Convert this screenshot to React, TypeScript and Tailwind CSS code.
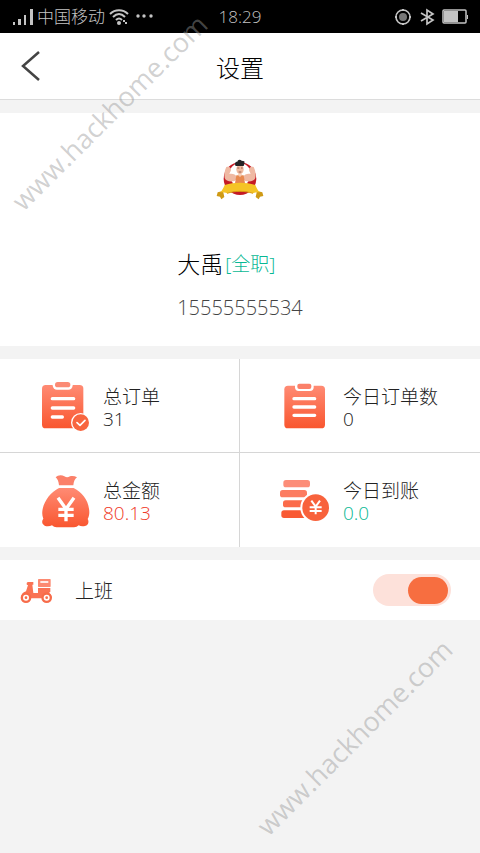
import { useState } from "react";
import type { ReactNode } from "react";

function OrangeFill({ id }: { id: string }) {
  return (
    <defs>
      <linearGradient id={id} x1="0" y1="0" x2="0" y2="1">
        <stop offset="0" stopColor="#ff8b74" />
        <stop offset="1" stopColor="#f9562f" />
      </linearGradient>
    </defs>
  );
}

function TotalOrdersIcon() {
  return (
    <svg width="50" height="52" viewBox="0 0 150 156" aria-hidden="true">
      <OrangeFill id="total-orders" />
      <rect x="6" y="15" width="124" height="130" rx="11" fill="url(#total-orders)" />
      <rect x="38" y="-4" width="60" height="33" rx="13" fill="#fff" />
      <rect x="45" y="6" width="46" height="16" rx="8" fill="#fb8a74" />
      <path d="M37 56h64M37 84h64M37 111h30" stroke="#fff" strokeWidth="10" strokeLinecap="round" />
      <circle cx="122" cy="128" r="29" fill="#fff" />
      <circle cx="122" cy="128" r="25" fill="#f8653f" />
      <path d="M111 128l9 8 15-15" fill="none" stroke="#fff" strokeWidth="5" strokeLinecap="round" strokeLinejoin="round" />
    </svg>
  );
}

function TodayOrdersIcon() {
  return (
    <svg width="50" height="52" viewBox="0 0 150 156" aria-hidden="true">
      <OrangeFill id="today-orders" />
      <rect x="13" y="17" width="122" height="128" rx="11" fill="url(#today-orders)" />
      <rect x="45" y="0" width="56" height="33" rx="11" fill="#fff" />
      <rect x="52" y="11" width="42" height="16" rx="6" fill="#fb8069" />
      <path d="M42 56h62M42 81h62M42 106h62" stroke="#fff" strokeWidth="10" strokeLinecap="round" />
    </svg>
  );
}

function MoneyBagIcon() {
  return (
    <svg width="50" height="56" viewBox="0 0 150 168" aria-hidden="true">
      <OrangeFill id="money-bag" />
      <path d="M47 16c6-7 18-8 26-3 7 4 11 3 17 0 7-2 14-1 21 3-7 6-10 13-11 24H57c-1-11-4-18-10-24z" fill="#fb8069" />
      <path
        d="M57 48h44c25 13 42 34 46 62 2 11 1 22-4 31 5 8 2 18-8 21-7 2-14 1-19-2-4 4-8 6-14 6H50c-6 0-10-2-14-6-6 3-15 4-22 1-8-4-10-13-4-21-4-9-4-19-2-29 6-28 25-50 49-63z"
        fill="url(#money-bag)"
      />
      <path d="M54 77l24 34 24-34M78 108v40M55 112h46M55 130h46" fill="none" stroke="#fff" strokeWidth="10" />
    </svg>
  );
}

function CoinsIcon() {
  return (
    <svg width="50" height="48" viewBox="0 0 150 144" aria-hidden="true">
      <rect x="10" y="12" width="80" height="22" rx="8" fill="#fc8d78" />
      <rect x="0" y="42" width="81" height="22" rx="8" fill="#fc7c61" />
      <rect x="9" y="73" width="80" height="21" rx="8" fill="#fb6b4a" />
      <rect x="4" y="103" width="84" height="23" rx="8" fill="#f95a34" />
      <circle cx="107" cy="95" r="46" fill="#fff" />
      <circle cx="107" cy="95" r="40" fill="#f8623c" />
      <path d="M94 74l13 18 13-18M107 91v24M89 94h36M89 105h36" fill="none" stroke="#fff" strokeWidth="6" />
    </svg>
  );
}

function ScooterIcon() {
  return (
    <svg width="33" height="27" viewBox="0 0 99 81" aria-hidden="true">
      <path d="M20 20c0-4 3-5 7-5h13v8h-3l3 25h14V33h37v11l-4 4c6 3 8 8 8 16H3c0-11 5-18 15-21l6-19c-3 0-4-1-4-4z" fill="#fa7354" />
      <rect x="54" y="6" width="38" height="24" rx="2" fill="#fc8a72" />
      <path d="M61 15h24" stroke="#fff" strokeWidth="5" />
      <circle cx="18" cy="62" r="16" fill="#f76c4a" />
      <circle cx="18" cy="62" r="9" fill="#fff" />
      <circle cx="18" cy="62" r="4" fill="#f76c4a" />
      <circle cx="80" cy="62" r="16" fill="#f76c4a" />
      <circle cx="80" cy="62" r="9" fill="#fff" />
      <circle cx="80" cy="62" r="4" fill="#f76c4a" />
    </svg>
  );
}

function Mascot() {
  return (
    <svg width="48" height="44" viewBox="0 0 144 132" role="img" aria-label="头像">
      <circle cx="72" cy="62" r="49" fill="#c41a25" />
      <circle cx="72" cy="49" r="33" fill="#fff" />
      <path d="M50 64h44v22H50z" fill="#fff" />
      {/* arms */}
      <path d="M31 27c7-3 14 1 14 8 0 6-5 8-5 13 9-2 19 1 22 8 1 8-5 14-12 14-11 1-22-2-24-10-2-11 0-24 5-33z" fill="#efb9a3" />
      <path d="M113 27c-7-3-14 1-14 8 0 6 5 8 5 13-9-2-19 1-22 8-1 8 5 14 12 14 11 1 22-2 24-10 2-11 0-24-5-33z" fill="#efb9a3" />
      {/* head */}
      <ellipse cx="72" cy="34" rx="11" ry="15" fill="#f0bba1" />
      <path d="M59 24c-4-7-1-14 5-13 1-6 8-8 13-3l8 2c1 5 0 9-2 14z" fill="#252326" />
      <path d="M64 30h6M75 30h5M68 42h8" stroke="#71352a" strokeWidth="2" />
      <path d="M61 52h22l5 30H56z" fill="#e88950" />
      <path d="M65 49l7 9 7-9" fill="#f4c8ae" />
      {/* ribbon */}
      <path d="M5 103l16-4 4 18-9 7-4-8-10-2zM139 103l-16-4-4 18 9 7 4-8 10-2z" fill="#cf9a15" />
      <path d="M13 103c6-6 9-13 13-22 30-9 62-9 92 0 4 9 7 16 13 22-9 0-15 1-20 3-25-8-53-8-78 0-5-2-11-3-20-3z" fill="#f5c426" />
      <path d="M33 106c25-8 53-8 78 0" fill="none" stroke="#d99c13" strokeWidth="3" />
    </svg>
  );
}

function StatusBar() {
  return (
    <div className="grid h-[33px] grid-cols-[1fr_auto_1fr] items-center bg-black px-3 text-[17px] text-[#c4c4c4]">
      <div className="flex items-center gap-1">
        <svg width="21" height="18" viewBox="0 0 21 18" fill="#c4c4c4" aria-hidden="true">
          <path d="M1 14h2v3H1zM6 11h3v6H6zM12 7h2v10h-2zM18 1h3v16h-3z" />
        </svg>
        <span>中国移动</span>
        <svg width="20" height="18" viewBox="0 0 20 18" fill="none" stroke="#c4c4c4" strokeWidth="2" aria-hidden="true">
          <path d="M1 6c5-5 13-5 18 0M4 9c4-4 8-4 12 0M7 12c2-2 4-2 6 0" />
          <circle cx="10" cy="15" r="2" fill="#c4c4c4" stroke="none" />
          <path d="M15 12v2M17 14v2" />
        </svg>
        <svg width="20" height="18" viewBox="0 0 20 18" fill="#c4c4c4" aria-hidden="true">
          <circle cx="5" cy="8" r="1.7" />
          <circle cx="11" cy="8" r="1.7" />
          <circle cx="18" cy="8" r="1.7" />
        </svg>
      </div>
      <time>18:29</time>
      <div className="flex items-center justify-end gap-[7px]">
        <svg width="18" height="18" viewBox="0 0 18 18" fill="none" stroke="#c4c4c4" aria-hidden="true">
          <circle cx="9" cy="9" r="7" strokeWidth="1.6" />
          <circle cx="9" cy="9" r="4" fill="#777" stroke="none" />
          <path d="M9 1v2M9 15v2M1 9h2M15 9h2" strokeWidth="2" />
        </svg>
        <svg width="16" height="18" viewBox="0 0 16 18" fill="none" stroke="#c4c4c4" strokeWidth="1.7" aria-hidden="true">
          <path d="M2 5l12 7-6 4V2l6 4-12 7" />
        </svg>
        <svg width="26" height="16" viewBox="0 0 26 16" aria-hidden="true">
          <rect x="1" y="1" width="23" height="13" rx="1" fill="none" stroke="#c4c4c4" strokeWidth="1.5" />
          <path d="M2 2h14v11H2zM25 6h1v4h-1z" fill="#c4c4c4" />
        </svg>
      </div>
    </div>
  );
}

type StatProps = { icon: ReactNode; label: string; value: string; valueClass?: string };

function Stat({ icon, label, value, valueClass = "" }: StatProps) {
  return (
    <div className="flex h-[94px] items-center gap-[13px] border-[#d6d6d6] bg-white pl-10 text-[19px] leading-[22px] odd:border-r nth-[-n+2]:border-b">
      {icon}
      <dl className="pt-1">
        <dt>{label}</dt>
        <dd className={valueClass}>{value}</dd>
      </dl>
    </div>
  );
}

function Watermark({ className }: { className: string }) {
  return (
    <div
      className={`pointer-events-none absolute -translate-x-1/2 -translate-y-1/2 -rotate-45 font-['Open_Sans','Noto_Sans',sans-serif] text-[27px] leading-none font-normal whitespace-nowrap text-[#999999]/45 ${className}`}
    >
      www.hackhome.com
    </div>
  );
}

export default function App() {
  const [working, setWorking] = useState(true);

  return (
    <div className="relative min-h-screen overflow-hidden bg-[#f3f3f3] font-['Open_Sans','Noto_Sans_CJK_SC',sans-serif] font-light text-[#222222]">
      <StatusBar />
      <header className="grid h-[67px] grid-cols-[1fr_auto_1fr] items-center border-b border-[#dcdcdc] bg-white px-5">
        <button type="button" aria-label="返回" className="w-6">
          <svg width="20" height="32" viewBox="0 0 20 32" fill="none" stroke="#444" strokeWidth="2.5">
            <path d="M19 2L3 16l16 14" />
          </svg>
        </button>
        <h1 className="pt-1 text-2xl text-black">设置</h1>
      </header>

      <main className="flex flex-col gap-[13px] pt-[13px]">
        <section className="flex h-[233px] flex-col items-center bg-white pt-[45px]">
          <Mascot />
          <div className="mt-11 flex flex-col gap-3">
            <div className="flex h-9 items-center">
              <h2 className="text-[23px] text-black">大禹</h2>
              <span className="ml-[2px] text-[19px] text-[#08b894]">[全职]</span>
            </div>
            <p className="text-xl leading-7 text-[#444444]">15555555534</p>
          </div>
        </section>

        <section className="grid grid-cols-2">
          <Stat icon={<TotalOrdersIcon />} label="总订单" value="31" />
          <Stat icon={<TodayOrdersIcon />} label="今日订单数" value="0" />
          <Stat icon={<MoneyBagIcon />} label="总金额" value="80.13" valueClass="text-[#f03a28]" />
          <Stat icon={<CoinsIcon />} label="今日到账" value="0.0" valueClass="text-[#08b894]" />
        </section>

        <section className="flex h-[60px] items-center bg-white pr-[29px] pl-5">
          <ScooterIcon />
          <label htmlFor="working" className="ml-[22px] flex-1 pt-[2px] text-[19px]">
            上班
          </label>
          <input
            id="working"
            type="checkbox"
            role="switch"
            checked={working}
            onChange={e => setWorking(e.target.checked)}
            className="flex h-8 w-[78px] cursor-pointer appearance-none items-center justify-start rounded-full bg-gray-200 px-[3px] before:h-[27px] before:w-10 before:rounded-full before:bg-gray-400 checked:justify-end checked:bg-[#fde1da] checked:before:bg-[#f76e40]"
          />
        </section>
      </main>

      <Watermark className="top-[112px] left-[109px]" />
      <Watermark className="top-[737px] left-[354px]" />
    </div>
  );
}
